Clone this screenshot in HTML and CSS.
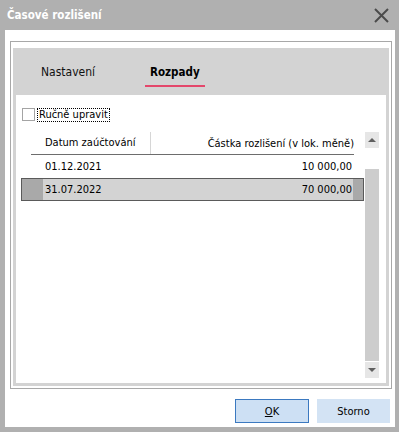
FILE: index.html
```html
<!DOCTYPE html>
<html lang="cs">
<head>
    <meta charset="UTF-8" />
    <title>Časové rozlišení</title>
    <link rel="stylesheet" href="styles.css">
</head>
<body>
<div class="window">
    <div class="titlebar">
        <span class="title">Časové rozlišení</span>
        <svg class="close" width="15" height="15" viewBox="0 0 15 15">
            <path d="M1 1L14 14M14 1L1 14" stroke="#4b4b4b" stroke-width="2" fill="none"/>
        </svg>
    </div>

    <div class="client">
        <div class="panel">
            <div class="tabbox">
                <div class="tabs">
                    <div class="tab">Nastavení</div>
                    <div class="tab active">Rozpady</div>
                </div>

                <!-- záložka Rozpady -->
                <div class="page">
                    <div class="check-row">
                        <span class="checkbox"></span>
                        <span class="check-label">Ručně upravit</span>
                    </div>

                    <div class="list">
                        <div class="grid">
                            <div class="grid-head">
                                <div class="col-date">Datum zaúčtování</div>
                                <div class="col-amount">Částka rozlišení (v lok. měně)</div>
                            </div>
                            <div class="grid-row">
                                <div class="row-hdr"></div>
                                <div class="col-date">01.12.2021</div>
                                <div class="col-amount">10 000,00</div>
                                <div class="row-end"></div>
                            </div>
                            <div class="grid-row selected">
                                <div class="row-hdr"></div>
                                <div class="col-date">31.07.2022</div>
                                <div class="col-amount">70 000,00</div>
                                <div class="row-end"></div>
                            </div>
                        </div>

                        <div class="scrollbar">
                            <div class="sb-btn"><span class="arrow-up"></span></div>
                            <div class="sb-track"><div class="sb-thumb"></div></div>
                            <div class="sb-btn"><span class="arrow-down"></span></div>
                        </div>
                    </div>
                </div>
            </div>
        </div>

        <div class="buttons">
            <button class="btn default"><u>O</u>K</button>
            <button class="btn">Storno</button>
        </div>
    </div>
</div>
</body>
</html>
```

FILE: styles.css
```css
/* okno dialogu */
body{margin:0;background:#b0b0b0;font-family:"DejaVu Sans Condensed","DejaVu Sans",sans-serif;font-stretch:condensed;font-size:11px;color:#000;}
.window{width:399px;height:432px;display:flex;flex-direction:column;}
.titlebar{height:30px;display:flex;align-items:center;justify-content:space-between;padding:0 10px 0 7px;color:#fff;font-weight:700;font-size:11.5px;}
.close{display:block;}
.client{flex:1;margin:0 4px 5px 5px;background:#fff;display:flex;flex-direction:column;}

/* panel se záložkami */
.panel{height:348px;box-sizing:border-box;margin:11px 3px 0 5px;border:1px solid #a8a8a8;padding:6px 2px 2px;display:flex;}
.tabbox{flex:1;background:#d3d3d3;padding:0 3px 3px;display:flex;flex-direction:column;}
.tabs{height:47px;display:flex;padding-left:20px;}
.tab{padding:16px 5px 5px;line-height:16px;height:16px;border-bottom:2px solid transparent;color:#111;font-size:12px;}
.tab:first-child{width:99px;}
.tab.active{font-weight:700;color:#000;font-size:11.5px;border-bottom-color:#e4476b;}
.page{flex:1;background:#fff;padding:12px 6px 5px 5px;display:flex;flex-direction:column;}

/* zaškrtávátko */
.check-row{display:flex;align-items:center;height:15px;}
.checkbox{width:11px;height:11px;border:1px solid #a4a4a4;margin-left:1px;background:#fff;}
.check-label{margin-left:2px;border:1px dotted #000;padding:0 1px;line-height:12px;}

/* mřížka */
.list{flex:1;margin-top:10px;display:flex;gap:1px;}
.grid{width:343px;}
.grid-head{display:flex;height:22px;align-items:center;margin:0 10px;border-bottom:1px solid #6d6d6d;}
.grid-head .col-date{width:105px;padding-left:14px;height:22px;line-height:22px;border-right:1px solid #d6d6d6;}
.grid-head .col-amount{flex:1;text-align:right;}
.grid-row{display:flex;height:21px;line-height:21px;border:1px solid transparent;}
.grid-row .row-hdr{width:21px;}
.grid-row .col-date{width:106px;padding-left:2px;}
.grid-row .col-amount{flex:1;text-align:right;padding-right:1px;}
.grid-row .row-end{width:10px;}
.grid-row.selected{background:#d3d3d3;border-color:#5a5a5a;}
.grid-row.selected .row-hdr,.grid-row.selected .row-end{background:#a9a9a9;}

/* posuvník */
.scrollbar{width:14px;display:flex;flex-direction:column;}
.sb-btn{height:16px;background:#e6e6e6;display:flex;align-items:center;justify-content:center;}
.arrow-up{border:4px solid transparent;border-top:0;border-bottom:4px solid #5f5f5f;}
.arrow-down{border:4px solid transparent;border-bottom:0;border-top:4px solid #5f5f5f;}
.sb-track{flex:1;padding:21px 0 1px;display:flex;}
.sb-thumb{flex:1;background:#cdcdcd;}

/* tlačítka */
.buttons{display:flex;justify-content:flex-end;gap:8px;padding:10px 5px 0;}
.btn{width:74px;height:24px;box-sizing:border-box;border:1px solid #d3e3f4;background:#d3e3f4;font:inherit;color:#000;padding:0;}
.btn.default{border-color:#3b79c0;background:#cde0f4;}
.btn:last-child{width:73px;}
```
